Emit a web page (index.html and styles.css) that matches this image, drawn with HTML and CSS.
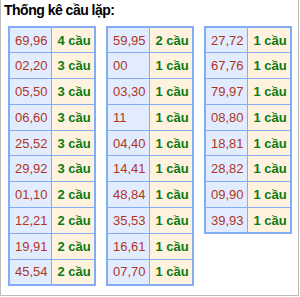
FILE: index.html
```html
<!DOCTYPE html>
<html>
<head>
<meta charset="utf-8">
<link rel="stylesheet" href="styles.css">
</head>
<body>
<div class="box">
  <div class="title">Thống kê cầu lặp:</div>
  <div class="tables">
    <table class="tk">
      <tr><td class="n">69,96</td><td class="c">4 cầu</td></tr>
      <tr><td class="n">02,20</td><td class="c">3 cầu</td></tr>
      <tr><td class="n">05,50</td><td class="c">3 cầu</td></tr>
      <tr><td class="n">06,60</td><td class="c">3 cầu</td></tr>
      <tr><td class="n">25,52</td><td class="c">3 cầu</td></tr>
      <tr><td class="n">29,92</td><td class="c">3 cầu</td></tr>
      <tr><td class="n">01,10</td><td class="c">2 cầu</td></tr>
      <tr><td class="n">12,21</td><td class="c">2 cầu</td></tr>
      <tr><td class="n">19,91</td><td class="c">2 cầu</td></tr>
      <tr><td class="n">45,54</td><td class="c">2 cầu</td></tr>
    </table>
    <table class="tk">
      <tr><td class="n">59,95</td><td class="c">2 cầu</td></tr>
      <tr><td class="n">00</td><td class="c">1 cầu</td></tr>
      <tr><td class="n">03,30</td><td class="c">1 cầu</td></tr>
      <tr><td class="n">11</td><td class="c">1 cầu</td></tr>
      <tr><td class="n">04,40</td><td class="c">1 cầu</td></tr>
      <tr><td class="n">14,41</td><td class="c">1 cầu</td></tr>
      <tr><td class="n">48,84</td><td class="c">1 cầu</td></tr>
      <tr><td class="n">35,53</td><td class="c">1 cầu</td></tr>
      <tr><td class="n">16,61</td><td class="c">1 cầu</td></tr>
      <tr><td class="n">07,70</td><td class="c">1 cầu</td></tr>
    </table>
    <table class="tk">
      <tr><td class="n">27,72</td><td class="c">1 cầu</td></tr>
      <tr><td class="n">67,76</td><td class="c">1 cầu</td></tr>
      <tr><td class="n">79,97</td><td class="c">1 cầu</td></tr>
      <tr><td class="n">08,80</td><td class="c">1 cầu</td></tr>
      <tr><td class="n">18,81</td><td class="c">1 cầu</td></tr>
      <tr><td class="n">28,82</td><td class="c">1 cầu</td></tr>
      <tr><td class="n">09,90</td><td class="c">1 cầu</td></tr>
      <tr><td class="n">39,93</td><td class="c">1 cầu</td></tr>
    </table>
  </div>
</div>
</body>
</html>
```
FILE: styles.css
```css
html, body {
  margin: 0;
  padding: 0;
  background: #fff;
}
.box {
  box-sizing: border-box;
  width: 299px;
  height: 296px;
  border: 1px solid #bcbcbc;
  border-top: none;
  font-family: "Liberation Sans", Arial, sans-serif;
}
.title {
  font-size: 14px;
  font-weight: bold;
  letter-spacing: -0.5px;
  color: #000;
  padding: 2px 0 0 3px;
  height: 26px;
  box-sizing: border-box;
}
.tables {
  display: flex;
  align-items: flex-start;
  gap: 10px;
  padding-left: 7px;
}
.tk {
  border-collapse: collapse;
  border: 2px solid #82acf4;
  width: 88px;
  font-size: 13px;
}
.tk td {
  border: 1px solid #82acf4;
  height: 25.8px;
  padding: 0 0 0 5px;
  white-space: nowrap;
  width: 44px;
  box-sizing: border-box;
}
.tk td.n {
  background: #e1edff;
  color: #b2341e;
}
.tk td.c {
  background: #fff2de;
  color: #0a7a14;
  font-weight: bold;
}
```
